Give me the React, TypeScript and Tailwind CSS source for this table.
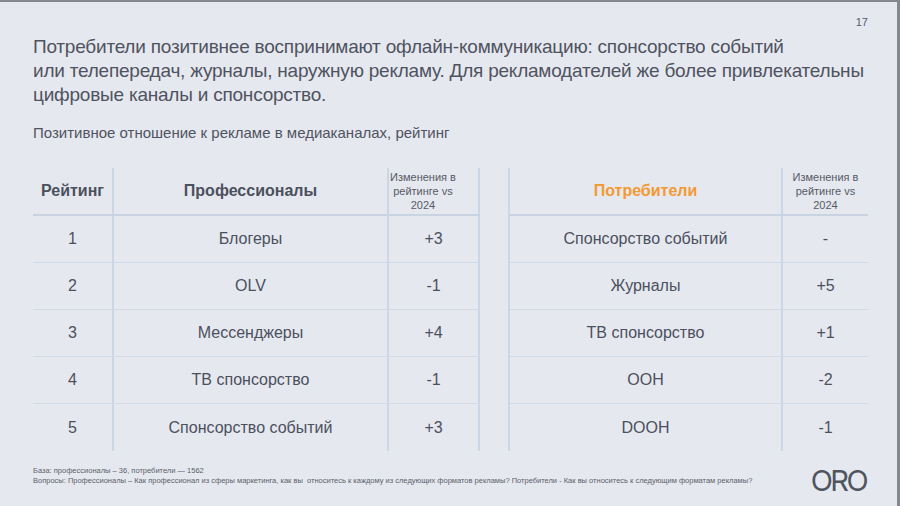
const pros = [
  { rank: "1", name: "Блогеры", delta: "+3" },
  { rank: "2", name: "OLV", delta: "-1" },
  { rank: "3", name: "Мессенджеры", delta: "+4" },
  { rank: "4", name: "ТВ спонсорство", delta: "-1" },
  { rank: "5", name: "Спонсорство событий", delta: "+3" },
];

const consumers = [
  { name: "Спонсорство событий", delta: "-" },
  { name: "Журналы", delta: "+5" },
  { name: "ТВ спонсорство", delta: "+1" },
  { name: "OOH", delta: "-2" },
  { name: "DOOH", delta: "-1" },
];

function ChangeHeader() {
  return (
    <span className="block text-center whitespace-nowrap text-[11px] leading-[14px] text-[#555a66]">
      Изменения в
      <br />
      рейтинге vs
      <br />
      2024
    </span>
  );
}

export default function App() {
  return (
    <div
      className="relative w-[900px] h-[506px] overflow-hidden bg-[#e6e8ef] border-t-2 border-r-[3px] border-[#85888f] text-[#4b505d]"
      style={{ fontFamily: '"Liberation Sans", Arial, sans-serif' }}
    >
      {/* PAGE NUMBER */}
      <div className="flex justify-end pt-[13px] pr-[29px] text-[11px] leading-[14px] text-[#555a66]">
        17
      </div>

      <div className="flex flex-col pl-[33px]">
        {/* TITLE */}
        <h1 className="mt-[6px] text-[19px] leading-[24px] whitespace-nowrap text-[#4f535f] tracking-[-0.22px]">
          Потребители позитивнее воспринимают офлайн-коммуникацию: спонсорство событий
          <br />
          или телепередач, журналы, наружную рекламу. Для рекламодателей же более привлекательны
          <br />
          цифровые каналы и спонсорство.
        </h1>

        <p className="mt-[16px] text-[15px] leading-[19px] text-[#4f535f]">
          Позитивное отношение к рекламе в медиаканалах, рейтинг
        </p>

        {/* TABLES */}
        <div className="mt-[26px] flex gap-[28px]">
          {/* PROFESSIONALS */}
          <div className="w-[447px] flex flex-col">
            <div className="flex h-[48px] border-b-2 border-[#c9d3e2]">
              <div className="w-[81px] flex items-center justify-center border-r-2 border-[#cdd6e4] text-[16px] font-bold">
                Рейтинг
              </div>
              <div className="w-[275px] flex items-center justify-center border-r-2 border-[#cdd6e4] text-[16px] font-bold">
                Профессионалы
              </div>
              <div className="w-[91px] flex items-center justify-start border-r-2 border-[#cdd6e4] pl-[1px]">
                <ChangeHeader />
              </div>
            </div>
            {pros.map((r, i) => (
              <div
                key={i}
                className={`flex h-[47px] text-[16px] ${
                  i < pros.length - 1 ? "border-b border-[#d0d9e6]" : ""
                }`}
              >
                <div className="w-[81px] flex items-center justify-center border-r-2 border-[#cdd6e4]">
                  {r.rank}
                </div>
                <div className="w-[275px] flex items-center justify-center border-r-2 border-[#cdd6e4]">
                  {r.name}
                </div>
                <div className="w-[91px] flex items-center justify-center border-r-2 border-[#cdd6e4]">
                  {r.delta}
                </div>
              </div>
            ))}
          </div>

          {/* CONSUMERS */}
          <div className="w-[360px] flex flex-col border-l-2 border-[#cdd6e4]">
            <div className="flex h-[48px] border-b-2 border-[#c9d3e2]">
              <div className="w-[273px] flex items-center justify-center border-r-2 border-[#cdd6e4] text-[16px] font-bold text-[#f39a33]">
                Потребители
              </div>
              <div className="w-[85px] flex items-center justify-center">
                <ChangeHeader />
              </div>
            </div>
            {consumers.map((r, i) => (
              <div
                key={i}
                className={`flex h-[47px] text-[16px] ${
                  i < consumers.length - 1 ? "border-b border-[#d0d9e6]" : ""
                }`}
              >
                <div className="w-[273px] flex items-center justify-center border-r-2 border-[#cdd6e4]">
                  {r.name}
                </div>
                <div className="w-[85px] flex items-center justify-center">
                  {r.delta}
                </div>
              </div>
            ))}
          </div>
        </div>

        {/* FOOTER */}
        <div className="mt-[10px] flex items-start justify-between pr-[31px]">
          <div className="mt-[5px] text-[7.5px] leading-[10px] text-[#5a5e69] whitespace-nowrap">
            База: профессионалы – 36, потребители — 1562
            <br />
            Вопросы: Профессионалы – Как профессионал из сферы маркетинга, как вы&nbsp; относитесь к каждому из следующих форматов рекламы? Потребители - Как вы относитесь к следующим форматам рекламы?
          </div>
          <div
            className="mt-[5px] text-[29px] leading-[30px] font-normal tracking-[-2.6px] text-[#50545f]"
            style={{ fontFamily: "Inter, sans-serif" }}
          >
            ORO
          </div>
        </div>
      </div>
    </div>
  );
}
